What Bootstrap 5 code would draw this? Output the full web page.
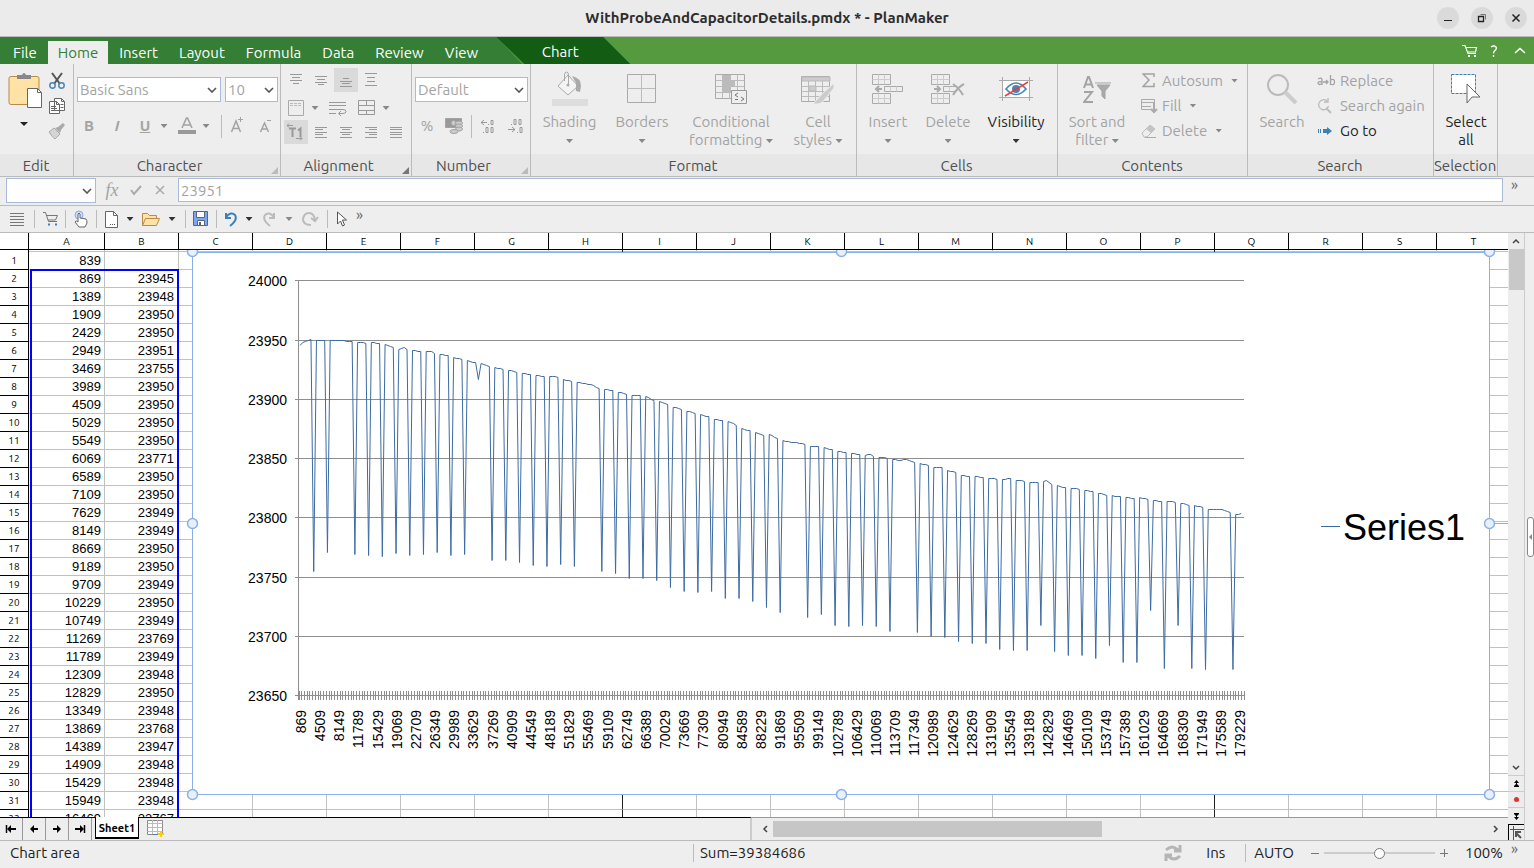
<!DOCTYPE html>
<html lang="en">
<head>
<meta charset="utf-8">
<meta name="viewport" content="width=device-width, initial-scale=1">
<title>WithProbeAndCapacitorDetails.pmdx * - PlanMaker</title>
<link href="https://cdn.jsdelivr.net/npm/bootstrap@5.3.0/dist/css/bootstrap.min.css" rel="stylesheet">
<style>
:root{--ui:Ubuntu,"Noto Sans",sans-serif;--face:#eee;--rule:#bbb;--dim:#a3a3a3;--field:#a9bbd8}
body{font-family:var(--ui);font-size:15px;line-height:18px;background:var(--face);color:#333}
svg{display:block;flex:none}
button{font:inherit;color:inherit;background:none;border:0;padding:0}
.off{color:var(--dim)}
.titlebar{height:37px;background:#ebebeb;border-bottom:1px solid #bbb}
.titlebar h1{font-size:15px;line-height:20px;font-weight:700;color:#2d2d2d}
.side{width:120px;padding-right:7px}
.winbtn{width:22px;height:22px;border-radius:50%;background:#dadada}
.tabbar{height:27px;background:#569a3f;color:#fff}
.maintabs{background:#357e35;padding-left:3px;padding-right:34px;gap:1px;clip-path:polygon(0 0,calc(100% - 26px) 0,100% 100%,0 100%)}
.rtab{padding:0 10px;height:23px;line-height:20px}
.rtab.current{background:var(--face);color:#357e35}
.charttab{background:#135c13;width:134px;margin-left:-26px;padding-right:6px;height:27px;line-height:26px;padding-top:2px;clip-path:polygon(0 0,107px 0,100% 100%,28px 100%)}
.ribbon{height:113px;border-bottom:1px solid var(--rule);background:linear-gradient(#eee 90px,#e7e7e7 90px)}
.group{position:relative;height:112px;box-shadow:inset -1px 0 var(--rule)}
.group-body{height:90px;padding-top:4px}
.group-name{height:22px;line-height:23px;padding-right:2px;text-align:center;color:#505050;white-space:nowrap}
.launcher{position:absolute;right:3px;bottom:2px;width:7px;height:7px;background:#bbb;clip-path:polygon(100% 0,100% 100%,0 100%)}
.launcher.live{background:#777}
.inset3{padding-left:3px;padding-right:3px}
.fields{padding-top:9px}
.w-edit{width:74px}.w-char{width:207px}.w-align{width:131px}.w-num{width:119px}.w-format{width:326px}.w-cells{width:201px}.w-cont{width:190px}.w-search{width:186px}.w-sel{width:64px}
.big{padding-top:3px;text-align:center;line-height:18px;align-self:flex-start;white-space:nowrap}
.big .pic{height:42px;display:flex;justify-content:center}
.tri{display:inline-block;width:7px;height:4px;background:#888;clip-path:polygon(0 0,100% 0,50% 100%);vertical-align:middle;flex:none}
.tri.live{background:#333}
.row25{height:25px;display:flex;align-items:center;white-space:nowrap}
.row25 .pic{width:26px;display:flex;justify-content:center}
.field.form-select,.field.form-control{border:1px solid var(--field);border-radius:0;background-color:#fff;color:var(--dim);font-size:15px;line-height:18px;height:25px;padding:0 2px;min-height:0;opacity:1}
.field.form-select{background-image:url("data:image/svg+xml,%3Csvg xmlns='http://www.w3.org/2000/svg' viewBox='0 0 10 6'%3E%3Cpath d='M1 1l4 4 4-4' fill='none' stroke='%23555' stroke-width='1.6'/%3E%3C/svg%3E");background-size:10px 6px;background-position:right 3px center;padding-right:16px}
.field.size-box{width:53px;flex:none}
.field.address{width:90px;flex:none;margin-left:6px}
.field.formula-line{width:1px;height:24px;margin-left:6px}
.tool{width:24px;height:24px;display:flex;align-items:center;justify-content:center}
.tool.slim{width:12px}
.tool.narrow{width:14px}
.tool.on{background:#dadada}
.tools{gap:1px}
.fx{font-family:"Liberation Serif",serif;font-size:18px;font-style:italic}
.vsep{width:1px;height:18px;background:var(--rule);flex:none}
.vsep.tall{height:23px}
.formulabar{height:29px;border-bottom:1px solid var(--rule);padding-top:1px}
.quickbar{height:27px;border-bottom:1px solid var(--rule)}
.quickbar .q{display:flex;align-items:center;justify-content:center;height:24px}
.q8{width:8px}.q10{width:10px}.q28{width:28px}.q30{width:30px}.q32{width:32px}.q34{width:34px}
.more{font-size:15px;line-height:14px;color:#666}
.sheet{background:#fff;overflow:hidden;min-height:0;position:relative}
.cells{border-collapse:separate;border-spacing:0;table-layout:fixed;width:1511px}
.cells th,.cells td{height:18px;padding:0;overflow:hidden;white-space:nowrap}
.cells thead th{height:17px;font-size:10px;line-height:15px;font-weight:400;color:#000;text-align:center;border-right:1px solid #000;border-bottom:1px solid #000}
.cells tbody th{font-size:10px;line-height:16px;font-weight:400;color:#000;text-align:center;border-right:1px solid #000;border-bottom:1px solid #000}
.cells td{font-family:"Liberation Sans",Arial,sans-serif;font-size:13px;line-height:17px;text-align:right;padding-right:4px;color:#000;border-right:1px solid #c0c0c0;border-bottom:1px solid #c0c0c0}
.cells td:nth-child(2){padding-right:3px}
.cells tbody tr:first-child>*{height:20px;padding-top:2px}
.cells tbody tr:first-child td{background:linear-gradient(#c0c0c0,#c0c0c0) 0 1px/100% 1px no-repeat}
.cells .pagebreak{border-right-color:#222}
.c-head{width:29px}.c-a{width:76px}.c-n{width:74px}
.selection{position:absolute;left:30px;top:36px;width:149px;height:600px;border:2px solid #00f}
.chart{position:absolute;left:186px;top:17px}
.bottomrow{height:23px}
.sheetbar{width:752px;border-right:2px solid #ccc;border-top:1px solid #000;height:23px}
.navb{width:23px;height:22px;display:flex;align-items:center;justify-content:center;border-right:1px solid #999}
.sheettab{position:relative;background:#fff;border:1px solid #000;border-top:0;border-bottom-width:2px;margin:-1px 0 0 3px;height:22px;width:44px;font-size:11px;font-weight:700;color:#000;line-height:22px;text-align:center}
.hbar{border-top:1px solid #999;background:#ededed}
.hthumb{background:#c6c6c6;height:16px;width:329px}
.vbar{width:17px;background:#ededed;border-right:1px solid #ccc}
.vbar button{display:flex;align-items:center;justify-content:center;height:16px;border-bottom:1px solid #ccc}
.vthumb{background:#c8c8c8;height:41px;margin-left:1px}
.vbar .corner{border-left:1px solid #000;border-top:1px solid #000}
.panelstrip{width:9px;background:#eee}
.handle{width:7px;height:40px;border:1px solid #888;border-radius:3px;background:#fff;display:flex;align-items:center;justify-content:center}
.status{height:28px;border-top:1px solid var(--rule);color:#222;padding-bottom:3px}
.st-left{width:693px;padding-left:10px}
.st-sum{padding-left:6px}
.zoomer{-webkit-appearance:none;appearance:none;width:111px;height:14px;background:linear-gradient(#ccc,#ccc) 0 6px/100% 2px no-repeat;margin:0}
.zoomer::-webkit-slider-thumb{-webkit-appearance:none;width:11px;height:11px;border-radius:50%;background:#fff;border:1px solid #777}
</style>
</head>
<body class="vh-100 overflow-hidden d-flex flex-column">

<header class="titlebar d-flex align-items-center justify-content-between flex-shrink-0">
  <div class="side"></div>
  <h1 class="m-0">WithProbeAndCapacitorDetails.pmdx * - PlanMaker</h1>
  <div class="side d-flex justify-content-end gap-1">
    <button class="winbtn me-2" aria-label="Minimize"><svg width="22" height="22"><path d="M7 13.500h8" stroke="#222"/></svg></button>
    <button class="winbtn me-2" aria-label="Restore"><svg width="22" height="22" fill="none"><path d="M7.500 9.500h5v5h-5z" stroke="#222" stroke-width="1.300"/><path d="M9.500 7.500h5v5" stroke="#777"/></svg></button>
    <button class="winbtn" aria-label="Close"><svg width="22" height="22"><path d="M7.500 7.500l7 7m0-7l-7 7" stroke="#222" stroke-width="1.500"/></svg></button>
  </div>
</header>

<nav class="tabbar d-flex flex-shrink-0">
  <div class="maintabs d-flex align-items-end">
    <button class="rtab">File</button><button class="rtab current">Home</button><button class="rtab">Insert</button><button class="rtab">Layout</button><button class="rtab">Formula</button><button class="rtab">Data</button><button class="rtab">Review</button><button class="rtab">View</button>
  </div>
  <button class="charttab">Chart</button>
  <div class="ms-auto d-flex align-items-center gap-2 pe-2">
    <button aria-label="Shop" class="me-1"><svg width="16" height="14" fill="none" stroke="#fff"><path d="M0 1.500h3l3 8h8M4 3.500h10.500l-1 4.500H6" stroke-width="1.200"/><path d="M6 12h2m4 0h2" stroke-width="2"/></svg></button>
    <button aria-label="Help"><svg width="8" height="12" fill="none" stroke="#fff" stroke-width="1.400"><path d="M1 2q3-2 5 0 1 2-1 3.500-1.500 1-1.500 3M3.500 10v2"/></svg></button>
    <button aria-label="Collapse ribbon" class="ms-2"><svg width="12" height="8"><path d="M1 6l5-4.500 5 4.500" fill="none" stroke="#fff" stroke-width="1.500"/></svg></button>
  </div>
</nav>

<section class="ribbon d-flex flex-shrink-0">
  <div class="group w-edit">
    <div class="group-body d-flex">
      <button class="ms-2 align-self-start" aria-label="Paste"><svg width="36" height="64"><path d="M3 8.500h26q2 0 2 2v26H3q-2 0-2-2v-24q0-2 2-2z" fill="#ffe2a6" stroke="#b98a4a"/><path d="M9 7h5q2-4 4 0h5v4H9z" fill="#888"/><path d="M19.500 20.500h10l4 4v15h-14z" fill="#fff" stroke="#666"/><path d="M29.500 20.500v4h4" fill="none" stroke="#666"/><path d="M12 54h8l-4 4z" fill="#222"/></svg></button>
      <div class="d-flex flex-column ms-1 pt-0">
        <button class="row25" aria-label="Cut"><svg width="18" height="18" fill="none"><path d="M4 1l8 11M14 1L6 12" stroke="#555" stroke-width="2"/><circle cx="4.500" cy="13.500" r="2.700" stroke="#4a86b5" stroke-width="1.500"/><circle cx="13.500" cy="13.500" r="2.700" stroke="#4a86b5" stroke-width="1.500"/></svg></button>
        <button class="row25" aria-label="Copy"><svg width="18" height="18" fill="#fff" stroke="#666"><path d="M6.500 1.500h7l3 3v9h-10zM1.500 4.500h7l3 3v9h-10z"/><path d="M8.500 4.500v3h3M3 9.500h5m-5 2h6m-6 2h6M13.500 1.500v3h3m-4 3h3m-3 3h3" fill="none"/></svg></button>
        <button class="row25" aria-label="Format painter"><svg width="18" height="18"><path d="M1 10l5-4 6 6-5 5q-2-1-6-7z" fill="#d5d5d5" stroke="#aaa"/><path d="M7 6l3-1 5-4 2 2-4 5-1 3z" fill="#aaa"/></svg></button>
      </div>
    </div>
    <div class="group-name">Edit</div>
  </div>

  <div class="group w-char">
    <div class="group-body inset3">
      <div class="d-flex gap-1 fields">
        <select class="form-select field flex-grow-1" aria-label="Font"><option>Basic Sans</option></select>
        <select class="form-select field size-box" aria-label="Font size"><option>10</option></select>
      </div>
      <div class="d-flex align-items-center mt-2 pt-1 off text-center fw-bold">
        <button class="tool">B</button><button class="tool ms-1 fst-italic">I</button><button class="tool ms-1 text-decoration-underline">U</button>
        <button class="tool narrow" aria-label="Underline style"><span class="tri"></span></button>
        <button class="tool ms-1" aria-label="Font colour"><svg width="18" height="18"><path d="M4 11L8.500 1h1L14 11M6 8h6" fill="none" stroke="#a3a3a3" stroke-width="1.600"/><path d="M0 13h18v4H0z" fill="#999"/></svg></button>
        <button class="tool narrow" aria-label="Font colours"><span class="tri"></span></button>
        <span class="vsep tall ms-2"></span>
        <button class="tool ms-1" aria-label="Larger"><svg width="16" height="18" fill="none" stroke="#a3a3a3"><path d="M1.500 15L6 4l4.500 11M3 11.500h6" stroke-width="1.500"/><path d="M8 2.500h5M10.500 0v5"/></svg></button>
        <button class="tool ms-1" aria-label="Smaller"><svg width="16" height="18" fill="none" stroke="#a3a3a3"><path d="M2.500 15l4-9 4 9M4 12h5" stroke-width="1.500"/><path d="M9 3.500h4"/></svg></button>
      </div>
    </div>
    <div class="group-name pe-3">Character</div><span class="launcher"></span>
  </div>

  <div class="group w-align">
    <div class="group-body inset3 off">
      <div class="d-flex tools">
        <button class="tool" aria-label="Top"><svg width="16" height="16" stroke="#999"><path d="M2 2.500h12M4 5.500h8M2 8.500h12M5 11.500h6"/></svg></button>
        <button class="tool" aria-label="Middle"><svg width="16" height="16" stroke="#999"><path d="M2 4.500h12M4 7.500h8M2 10.500h12M5 12.500h6"/></svg></button>
        <button class="tool on" aria-label="Bottom"><svg width="16" height="16" stroke="#999"><path d="M5 6.500h6M2 9.500h12M4 11.500h8M2 14.500h12"/></svg></button>
        <button class="tool" aria-label="Distribute"><svg width="16" height="16" stroke="#999"><path d="M2 1.500h12M4 5.500h8M4 9.500h8M2 13.500h12"/></svg></button>
      </div>
      <div class="d-flex pt-1 tools">
        <button class="tool" aria-label="Orientation"><svg width="16" height="16" fill="none" stroke="#aaa"><path d="M.5 .5h15v15H.5z"/><path d="M2 3.500h12M2 5.500h12" stroke-dasharray="3 1" stroke="#bbb"/></svg></button>
        <button class="tool slim" aria-label="Orientation options"><span class="tri"></span></button>
        <button class="tool ms-1" aria-label="Wrap text"><svg width="18" height="16" fill="none" stroke="#999"><path d="M0 2.500h17M0 5.500h17M0 9.500h14q3 0 3 2t-3 2h-4M0 13.500h7M12 11l-2.500 2.500L12 16"/></svg></button>
        <button class="tool ms-1" aria-label="Merge cells"><svg width="18" height="16" fill="none" stroke="#999"><path d="M.5 .5h16v14H.5zM.5 5.500h16M.5 10.500h16M8.500 .5v5m0 5v4"/></svg></button>
        <button class="tool slim" aria-label="Merge options"><span class="tri"></span></button>
      </div>
      <div class="d-flex tools">
        <button class="tool on" aria-label="Default direction"><svg width="18" height="18" fill="none" stroke="#999"><path d="M2 5.500h7M5.500 5v9M11 7.500l2.500-2v8.500" stroke-width="2"/><path d="M0 2.500h6M2 .5l-2 2 2 2M9 15.500h6M13 13.500l2 2-2 2" stroke-width="1"/></svg></button>
        <button class="tool" aria-label="Left"><svg width="16" height="16" stroke="#999"><path d="M2 3.500h12M2 5.500h8M2 8.500h12M2 10.500h8M2 13.500h12"/></svg></button>
        <button class="tool" aria-label="Center"><svg width="16" height="16" stroke="#999"><path d="M2 3.500h12M4 5.500h8M2 8.500h12M4 10.500h8M2 13.500h12"/></svg></button>
        <button class="tool" aria-label="Right"><svg width="16" height="16" stroke="#999"><path d="M2 3.500h12M6 5.500h8M2 8.500h12M6 10.500h8M2 13.500h12"/></svg></button>
        <button class="tool" aria-label="Justify"><svg width="16" height="16" stroke="#999"><path d="M2 3.500h12M2 5.500h12M2 8.500h12M2 10.500h12M2 13.500h12"/></svg></button>
      </div>
    </div>
    <div class="group-name pe-3">Alignment</div><span class="launcher live"></span>
  </div>

  <div class="group w-num">
    <div class="group-body inset3">
      <div class="fields"><select class="form-select field" aria-label="Number format"><option>Default</option></select></div>
      <div class="d-flex align-items-center mt-2 pt-1 off">
        <button class="tool">%</button>
        <button class="tool ms-1" aria-label="Currency"><svg width="20" height="18" fill="#ccc" stroke="#a3a3a3"><path d="M.5 1.500h16v9H.5z" fill="#999"/><circle cx="8.500" cy="6" r="2.500"/><ellipse cx="14" cy="6" rx="3.500" ry="2"/><ellipse cx="14" cy="9" rx="3.500" ry="2"/><ellipse cx="14" cy="12" rx="3.500" ry="2"/><ellipse cx="9" cy="14.500" rx="4" ry="2"/></svg></button>
        <span class="vsep tall ms-1"></span>
        <button class="tool ms-1" aria-label="More decimals"><svg width="16" height="16" fill="none" stroke="#999"><path d="M1 4.500h6M4 2L1 4.500 4 7M8 6.500h1M11 2.500h2v4h-2zM3 14.500h1M6 9.500h2v5H6zM11 9.500h2v5h-2z"/></svg></button>
        <button class="tool ms-1" aria-label="Fewer decimals"><svg width="16" height="16" fill="none" stroke="#999"><path d="M3 6.500h1M6 1.500h2v5H6zM11 1.500h2v5h-2zM0 11.500h7M4 9l3 2.500L4 14M9 14.500h1M12 9.500h2v5h-2z"/></svg></button>
      </div>
    </div>
    <div class="group-name pe-3">Number</div><span class="launcher"></span>
  </div>

  <div class="group w-format">
    <div class="group-body d-flex off inset3">
      <button class="big" style="width:71px"><span class="pic"><svg width="36" height="36"><path d="M6 15L16 4l10 11-10 9z" fill="#f4f4f4" stroke="#aaa"/><path d="M20 5q9 2 9 10l-1 6-4-1V12z" fill="#aaa"/><path d="M12.500 10V4q0-3 2-3t2 3v9" fill="none" stroke="#aaa"/><circle cx="16" cy="14" r="1.500" fill="#aaa"/><path d="M0 28h36v7H0z" fill="#ddd"/></svg></span>Shading<br><span class="tri"></span></button>
      <button class="big" style="width:74px"><span class="pic"><svg width="30" height="36" fill="none" stroke="#aaa"><path d="M.5 3.500h28v28H.5z"/><path d="M14.500 3v28M0 17.500h28" stroke="#bbb"/></svg></span>Borders<br><span class="tri"></span></button>
      <button class="big" style="width:104px"><span class="pic"><svg width="32" height="36" fill="none" stroke="#bbb"><path d="M8 3h8v6h4v6h-4v6H8z" fill="#bbb" stroke="none"/><path d="M.5 3.500h29v24H.5z" stroke="#aaa"/><path d="M.5 9.500h29M.5 15.500h29M.5 21.500h29M7.500 3.500v24M14.500 3.500v24M22.500 3.500v24"/><path d="M16.500 19.500h15v13h-15z" fill="#eee" stroke="#999"/><path d="M23 22l-3 2 3 2M20 28.500h3M26 26l3 2-3 2" stroke="#777"/></svg></span>Conditional<br>formatting <span class="tri"></span></button>
      <button class="big" style="width:70px"><span class="pic"><svg width="34" height="36" fill="none" stroke="#bbb"><path d="M.5 5.500h28v25H.5z" stroke="#aaa"/><path d="M1 6h28v4H1z" fill="#ccc"/><path d="M.5 15.500h28M.5 20.500h28M.5 25.500h28M7.500 10v20M14.500 10v20M21.500 10v20"/><path d="M8 15h7v5H8z" fill="#ccc"/><path d="M33 12L20 24l-8 9q9 1 12-5l9-11z" fill="#ccc" stroke="#eee"/></svg></span>Cell<br>styles <span class="tri"></span></button>
    </div>
    <div class="group-name">Format</div>
  </div>

  <div class="group w-cells">
    <div class="group-body d-flex off">
      <button class="big" style="width:62px"><span class="pic"><svg width="32" height="36" fill="none" stroke="#aaa"><path d="M.5 3.500h18v10H.5zM.5 22.500h18v10H.5zM12.500 15.500h18v5h-18z"/><path d="M.5 8.500h18M6.500 3.500v10M12.500 3.500v10M.5 27.500h18M6.500 22.500v10M12.500 22.500v10M18.500 15.500v5M24.500 15.500v5" stroke="#ccc"/><path d="M10 18H4m3-3l-3 3 3 3" stroke-width="2"/></svg></span>Insert<br><span class="tri"></span></button>
      <button class="big" style="width:58px"><span class="pic"><svg width="34" height="36" fill="none" stroke="#aaa"><path d="M.5 3.500h18v10H.5zM.5 22.500h18v10H.5zM24 15.500H12.500v5H24"/><path d="M.5 8.500h18M6.500 3.500v10M12.500 3.500v10M.5 27.500h18M6.500 22.500v10M12.500 22.500v10M18.500 15.500v5" stroke="#ccc"/><path d="M3 18h6m-3-3l3 3-3 3M22 13q6 4 10 11M33 13q-6 3-11 11" stroke-width="2"/></svg></span>Delete<br><span class="tri"></span></button>
      <button class="big text-dark" style="width:78px"><span class="pic"><svg width="34" height="36" fill="none" stroke="#aaa"><path d="M4 9h26v17H4z" fill="#fff" stroke="none"/><path d="M0 9.500h34M0 26.500h34M3.500 6v24M30.500 6v24"/><path d="M7 18q10-12 20 0-10 11-20 0z" stroke="#4a86b5" stroke-width="1.700"/><circle cx="17" cy="18" r="4" fill="#4a86b5" stroke="none"/><path d="M6 25L29 11" stroke="#f33" stroke-width="1.500"/></svg></span>Visibility<br><span class="tri live"></span></button>
    </div>
    <div class="group-name">Cells</div>
  </div>

  <div class="group w-cont">
    <div class="group-body d-flex off">
      <button class="big" style="width:78px"><span class="pic"><svg width="28" height="36" fill="none" stroke="#a3a3a3" stroke-width="2"><path d="M1 17L5 6h1l4 11M2.500 13.500h6M1 21h8L1 31h9"/><path d="M12 12h16M14 14h13l-5 6v8l-3-3v-5z" fill="#aaa" stroke-width="1"/></svg></span>Sort and<br>filter <span class="tri"></span></button>
      <div>
        <button class="row25"><span class="pic"><svg width="14" height="15"><path d="M12 4V1H1l6 6-6 6.500h11V10" fill="none" stroke="#a3a3a3" stroke-width="1.500"/></svg></span>Autosum<span class="tri ms-2"></span></button>
        <button class="row25"><span class="pic"><svg width="17" height="16" fill="none" stroke="#aaa"><path d="M10 11.500H.5v-10h13v6M.5 4.500h13M.5 8.500H10"/><path d="M13 5v9m-3-3l3 3 3-3" stroke-width="2"/></svg></span>Fill<span class="tri ms-2"></span></button>
        <button class="row25"><span class="pic"><svg width="16" height="16"><path d="M1 10l8-8 5 4-8 8H3z" fill="#eee" stroke="#bbb"/><path d="M5 6l4-4 5 4-4 4z" fill="#c4c4c4"/><path d="M4 14.500h11" stroke="#aaa"/></svg></span>Delete<span class="tri ms-2"></span></button>
      </div>
    </div>
    <div class="group-name">Contents</div>
  </div>

  <div class="group w-search">
    <div class="group-body d-flex off">
      <button class="big" style="width:68px"><span class="pic"><svg width="32" height="36" fill="none" stroke="#bbb"><circle cx="12" cy="14" r="10" stroke-width="2"/><path d="M19 21l11 11" stroke-width="4" stroke="#ccc"/></svg></span>Search</button>
      <div>
        <button class="row25"><svg class="me-1" width="20" height="14" fill="none" stroke="#a3a3a3" stroke-width="1.300"><path d="M2 5q4-2 4 1v5M6 8Q2 7 2 9.500q1 2 4 0M7 8h5M10 6l2 2-2 2M14.500 1v10M14.500 6q4-2 4 2t-4 2"/></svg>Replace</button>
        <button class="row25"><svg class="me-1" width="20" height="16" fill="none" stroke="#bbb"><path d="M11 3a5 5 0 1 0 1.500 5M12 0v4H8" stroke-width="1.300"/><path d="M10 10l5 5" stroke-width="2"/></svg>Search again</button>
        <button class="row25 text-dark"><svg class="me-1" width="20" height="12"><path d="M2 4h1v4H2zM4 4h1v4H4zM7 4h4V2l5 4-5 4V8H7z" fill="#3c80b4"/></svg>Go to</button>
      </div>
    </div>
    <div class="group-name">Search</div>
  </div>

  <div class="group w-sel">
    <div class="group-body d-flex">
      <button class="big w-100 text-dark"><span class="pic"><svg width="32" height="36"><path d="M1.500 3.500h24v19h-24z" fill="#fff" stroke="#3c80b4" stroke-dasharray="3 1"/><path d="M17 13v19l5-6h8z" fill="#fff" stroke="#666"/></svg></span>Select<br>all</button>
    </div>
    <div class="group-name">Selection</div>
  </div>
</section>

<section class="formulabar d-flex align-items-start flex-shrink-0">
  <select class="form-select field address" aria-label="Cell address"><option></option></select>
  <div class="d-flex align-items-center off ps-1">
    <button class="tool fx">fx</button>
    <button class="tool" aria-label="Accept"><svg width="14" height="12"><path d="M2 6l3 4 7-8" fill="none" stroke="#aaa" stroke-width="2"/></svg></button>
    <button class="tool" aria-label="Cancel"><svg width="12" height="12"><path d="M2 2l8 8m0-8l-8 8" stroke="#aaa" stroke-width="1.500"/></svg></button>
  </div>
  <input class="form-control field formula-line flex-grow-1" value="23951" aria-label="Formula">
  <button class="more ps-2 pe-3">»</button>
</section>

<section class="quickbar d-flex align-items-center flex-shrink-0">
  <button class="q q34" aria-label="Menu"><svg width="14" height="16" stroke="#777"><path d="M0 2.500h14M0 5.500h14M0 8.500h14M0 11.500h14M0 14.500h14"/></svg></button><span class="vsep"></span>
  <button class="q q30" aria-label="Shop"><svg width="17" height="16" fill="none" stroke="#777"><path d="M1 1.500h2.500l3 9H15M4.500 4.500h11l-2 4.500H6"/><path d="M6 13.500h2m5 0h2" stroke="#3c80b4" stroke-width="2"/></svg></button><span class="vsep"></span>
  <button class="q q30" aria-label="Touch mode"><svg width="16" height="18"><circle cx="6" cy="5" r="4" fill="#cfdcf8" stroke="#8aaaf0"/><path d="M5 12V4q1-2 2 0v4l6 1q1 1 1 4l-2 4H6l-4-5q1-2 3 0z" fill="#fff" stroke="#666"/></svg></button><span class="vsep"></span>
  <button class="q q28" aria-label="New"><svg width="13" height="17"><path d="M.5 .5h8l4 4v12H.5z" fill="#fff" stroke="#666"/><path d="M8.500 .5v4h4" fill="none" stroke="#666"/><path d="M5 13.500h6" stroke="#555" stroke-dasharray="1"/></svg></button>
  <button class="q q10" aria-label="New options"><span class="tri live"></span></button>
  <button class="q q32" aria-label="Open"><svg width="18" height="15"><path d="M.5 13.500v-12h5l2 2h7v3" fill="#ffe2a6" stroke="#b98a4a"/><path d="M.5 13.500l3-7h14l-3 7z" fill="#ffe2a6" stroke="#b98a4a"/></svg></button>
  <button class="q q10" aria-label="Open options"><span class="tri live"></span></button><span class="vsep ms-2"></span>
  <button class="q q30" aria-label="Save"><svg width="16" height="16"><path d="M.5 .5h14v14H.5z" fill="#7fa5f5" stroke="#567"/><path d="M3.500 .5h8v6h-8zM4.500 9.500h7v5h-7z" fill="#fff" stroke="#567"/><path d="M6 11h2v3H6z" fill="#567"/></svg></button><span class="vsep"></span>
  <button class="q q28" aria-label="Undo"><svg width="14" height="16" fill="none" stroke="#3c80b4" stroke-width="2"><path d="M2 2v5h5M2 6q5-6 9-2 3 5-5 11"/></svg></button>
  <button class="q q8" aria-label="Undo list"><span class="tri live"></span></button>
  <button class="q q32" aria-label="Redo"><svg width="14" height="16" fill="none" stroke="#bbb" stroke-width="2"><path d="M12 2v5H7M12 6Q7 0 3 4q-3 5 5 11"/></svg></button>
  <button class="q q8" aria-label="Redo list"><span class="tri"></span></button>
  <button class="q q34" aria-label="Repeat"><svg width="18" height="16" fill="none" stroke="#bbb" stroke-width="2"><path d="M10 14q-8 0-8-6 1-6 6-6 5 0 6 7M10 7l4 3 3-4"/></svg></button><span class="vsep"></span>
  <button class="q q28" aria-label="Select objects"><svg width="12" height="17"><path d="M1.500 1v12l3-3 2 5 2-1-2-5h4z" fill="#fff" stroke="#555"/></svg></button>
  <button class="more mb-2">»</button>
</section>

<main class="d-flex flex-grow-1" style="min-height:0">
  <div class="d-flex flex-column flex-grow-1" style="min-width:0">
    <div class="sheet flex-grow-1">
      <table class="cells" id="cells"></table>
      <div class="selection"></div>
      <svg class="chart" id="chart" width="1323" height="552" viewBox="186 250 1323 552" font-family="Liberation Sans, Arial, sans-serif" font-size="14"></svg>
    </div>
    <div class="bottomrow d-flex flex-shrink-0">
      <div class="sheetbar d-flex flex-shrink-0">
        <button class="navb" aria-label="First sheet"><svg width="12" height="10"><path d="M1.500 1v8" stroke="#000" stroke-width="1.500"/><path d="M2 5l4-4v3h5v2H6v3z"/></svg></button>
        <button class="navb" aria-label="Previous sheet"><svg width="10" height="10"><path d="M1 5l4-4v3h4v2H5v3z"/></svg></button>
        <button class="navb" aria-label="Next sheet"><svg width="10" height="10"><path d="M9 5L5 1v3H1v2h4v3z"/></svg></button>
        <button class="navb" aria-label="Last sheet"><svg width="12" height="10"><path d="M10.500 1v8" stroke="#000" stroke-width="1.500"/><path d="M10 5L6 1v3H1v2h5v3z"/></svg></button>
        <button class="sheettab">Sheet1</button>
        <button class="ms-2" aria-label="Add sheet"><svg width="18" height="20" fill="none" stroke="#888"><path d="M.5 1.500h15v14H.5z" fill="#fff"/><path d="M.5 4.500h15M.5 8.500h15M.5 12.500h15M5.500 1v14M10.500 1v14" stroke="#bbb"/><path d="M6 15.500h4" stroke="#3c80b4"/><path d="M14 12v6m-3-3h6" stroke="#fc0" stroke-width="2"/></svg></button>
      </div>
      <div class="hbar d-flex align-items-center flex-grow-1 ps-1">
        <button class="tool" style="width:17px" aria-label="Scroll left"><svg width="6" height="8"><path d="M5 1L2 4l3 3" fill="none" stroke="#444" stroke-width="1.500"/></svg></button>
        <div class="hthumb"></div>
        <button class="tool ms-auto" aria-label="Scroll right"><svg width="6" height="8"><path d="M1 1l3 3-3 3" fill="none" stroke="#444" stroke-width="1.500"/></svg></button>
      </div>
    </div>
  </div>
  <div class="vbar d-flex flex-column flex-shrink-0">
    <button aria-label="Scroll up" class="border-0"><svg width="8" height="6"><path d="M1 5l3-3 3 3" fill="none" stroke="#444" stroke-width="1.500"/></svg></button>
    <div class="vthumb"></div>
    <button aria-label="Scroll down" class="mt-auto"><svg width="8" height="6"><path d="M1 1l3 3 3-3" fill="none" stroke="#444" stroke-width="1.500"/></svg></button>
    <button aria-label="Previous page"><svg width="7" height="8"><path d="M3.500 0L6 3H4v1l2 2H1l2-2V3H1zM1 6h5v1H1z"/></svg></button>
    <button aria-label="Go to object"><svg width="7" height="7"><circle cx="3.500" cy="3.500" r="2.500" fill="#d33"/></svg></button>
    <button aria-label="Next page" class="border-0"><svg width="7" height="8"><path d="M3.500 8L6 5H4V4l2-2H1l2 2v1H1zM1 1h5v1H1z"/></svg></button>
    <button aria-label="Corner" class="corner border-bottom-0"><svg width="14" height="14" fill="none" stroke="#555"><path d="M3.500 0v14M0 3.500h14"/><path d="M11 12L6 7m0 4V6h5" stroke-width="2"/></svg></button>
  </div>
  <div class="panelstrip d-flex align-items-center justify-content-end"><button class="handle" aria-label="Open sidebar"><svg width="3" height="6"><path d="M3 0v6L0 3z" fill="#888"/></svg></button></div>
</main>

<footer class="status d-flex align-items-center flex-shrink-0">
  <div class="st-left">Chart area</div>
  <span class="vsep"></span>
  <div class="st-sum">Sum=39384686</div>
  <div class="ms-auto d-flex align-items-center">
    <svg class="me-3" width="18" height="18" fill="none" stroke="#b5b5b5" stroke-width="3"><path d="M2 6q6-6 12 0M16 1v6h-6M16 12q-6 6-12 0M2 17v-6h6"/></svg>
    <span class="ms-2 me-3">Ins</span><span class="vsep ms-1 me-2"></span><span class="me-3">AUTO</span>
    <button aria-label="Zoom out" class="me-1"><svg width="10" height="10"><path d="M1 5.500h8" stroke="#777"/></svg></button>
    <input type="range" class="zoomer" aria-label="Zoom" min="0" max="100" value="50">
    <button aria-label="Zoom in" class="ms-1 me-3"><svg width="10" height="10"><path d="M1 5.500h8M5.500 1v8" stroke="#777"/></svg></button>
    <span>100%</span><button class="more ps-2 pe-3 mb-2">»</button>
  </div>
</footer>

<script>
// Worksheet: column B holds the readings, column A the sample times in ms.
const readings = [23945,23948,23950,23950,23951,23755,23950,23950,23950,23950,23771,23950,23950,23949,23949,23950,23950,23949,23950,23949,23769,23949,23948,23950,23948,23768,23947,23948,23948,23948,23767];
const cols = [...'ABCDEFGHIJKLMNOPQRST'];
const brk = c => (c === 'H' || c === 'P') ? ' class="pagebreak"' : '';
let html = '<colgroup><col class="c-head"><col class="c-a">' + '<col class="c-n">'.repeat(19) + '</colgroup><thead><tr><th></th>'
  + cols.map(c => `<th scope="col">${c}</th>`).join('') + '</tr></thead><tbody>';
for (let r = 1; r <= 32; r++) {
  const a = r === 1 ? 839 : 869 + 520 * (r - 2), b = r === 1 ? '' : readings[r - 2];
  html += `<tr><th scope="row">${r}</th>` + cols.map(c => `<td${brk(c)}>${c === 'A' ? a : c === 'B' ? b : ''}</td>`).join('') + '</tr>';
}
document.getElementById('cells').innerHTML = html + '</tbody>';

// Chart: slow discharge curve [x, y], and dips [sample index, y].
const curve = [[299,346],[304,341],[311,339],[316,340],[340,340],[352,341],[363,342],[366,343],[372,342],[379,343],[385,344],[393,347],[399,349],[404,347],[408,349],[420,351],[432,351],[435,353],[448,355],[454,357],[462,359],[475,362],[482,363],[489,366],[500,368],[510,370],[522,373],[531,374],[544,376],[556,376],[563,379],[571,381],[578,382],[591,384],[599,388],[612,390],[620,392],[627,394],[632,395],[641,395],[648,397],[654,400],[660,401],[667,404],[674,407],[682,409],[688,411],[695,413],[708,416],[715,419],[723,420],[731,422],[737,425],[742,428],[749,430],[757,433],[763,435],[769,434],[777,438],[783,440],[793,442],[803,443],[811,446],[820,446],[824,447],[831,449],[838,451],[846,452],[852,453],[860,454],[866,455],[870,453],[874,456],[882,457],[892,459],[900,460],[907,459],[914,462],[920,463],[928,465],[935,467],[941,467],[948,470],[955,472],[962,475],[969,476],[977,476],[984,477],[990,478],[1003,479],[1010,478],[1018,480],[1022,480],[1030,482],[1037,482],[1046,480],[1052,484],[1064,487],[1075,488],[1085,490],[1093,491],[1100,493],[1107,495],[1120,496],[1134,498],[1140,497],[1148,499],[1154,500],[1162,501],[1172,501],[1182,503],[1190,505],[1201,506],[1208,509],[1222,509],[1230,512],[1235,514],[1246,513]];
const dips = new Map([[5,571],[10,552],[20,554],[25,555],[30,556],[35,553],[40,555],[45,554],[50,552],[55,555],[60,554],[65,379],[70,560],[75,560],[80,562],[85,565],[90,566],[95,564],[100,566],[110,571],[115,573],[120,578],[125,578],[130,580],[135,587],[140,591],[145,592],[150,591],[155,598],[160,598],[165,601],[170,607],[175,612],[185,617],[190,614],[195,625],[200,626],[205,625],[210,626],[215,631],[225,632],[230,636],[235,637],[240,641],[245,643],[250,643],[255,649],[260,650],[265,650],[270,625],[275,651],[280,655],[285,655],[290,658],[295,645],[300,662],[305,662],[310,610],[315,668],[320,625],[325,668],[330,669],[340,669]]);
const left = 299, right = 1244, samples = 344, step = (right - left) / samples;
const level = x => {
  const k = curve.findIndex(p => p[0] > x), [x0, y0] = curve[k - 1], [x1, y1] = curve[k];
  return y0 + (y1 - y0) * (x - x0) / (x1 - x0);
};
let s = '<rect x="192.5" y="252.500" width="1297" height="542" fill="#fff" stroke="#8ab0ea"/><path d="M1489 523.500h20" stroke="#8ab0ea"/>';
let axes = '';
for (let i = 0; i < 8; i++) {
  const y = [280, 340, 399, 458, 517, 577, 636, 695][i];
  axes += `M295 ${y + 0.5}H1244`;
  s += `<text x="287" y="${y + 6}" text-anchor="end">${24000 - 50 * i}</text>`;
}
s += `<path d="${axes}M298.500 280V700" stroke="#8e8e8e" fill="none" shape-rendering="crispEdges"/>`;
let ticks = '', pts = '';
for (let i = 0; i <= samples; i++) ticks += `M${left + i * step} 691v9`;
s += `<path d="${ticks}" stroke="#8e8e8e" shape-rendering="crispEdges"/>`;
for (let i = 0; i < samples; i++) {
  const x = 300 + i * 2.744;
  pts += `${x},${Math.round(dips.get(i) ?? level(x)) + 0.5} `;
  if (i % 7 === 0) s += `<text transform="translate(${Math.round(306 + i * 2.738)} 710) rotate(-90)" text-anchor="end">${869 + 520 * i}</text>`;
}
s += `<polyline points="${pts}" fill="none" stroke="#3d6ba3"/><path d="M1321 526.500h19" stroke="#3d6ba3"/><text x="1343" y="540" font-size="36">Series1</text>`;
for (const [x, y] of [[192,251],[841,251],[1489,251],[192,523],[1489,523],[192,794],[841,794],[1489,794]])
  s += `<circle cx="${x + .5}" cy="${y + .5}" r="5" fill="#e8f0fd" stroke="#8ab0ea" stroke-width="1.500"/>`;
document.getElementById('chart').innerHTML = s;
</script>
<script src="https://cdn.jsdelivr.net/npm/bootstrap@5.3.0/dist/js/bootstrap.bundle.min.js"></script>
</body>
</html>
